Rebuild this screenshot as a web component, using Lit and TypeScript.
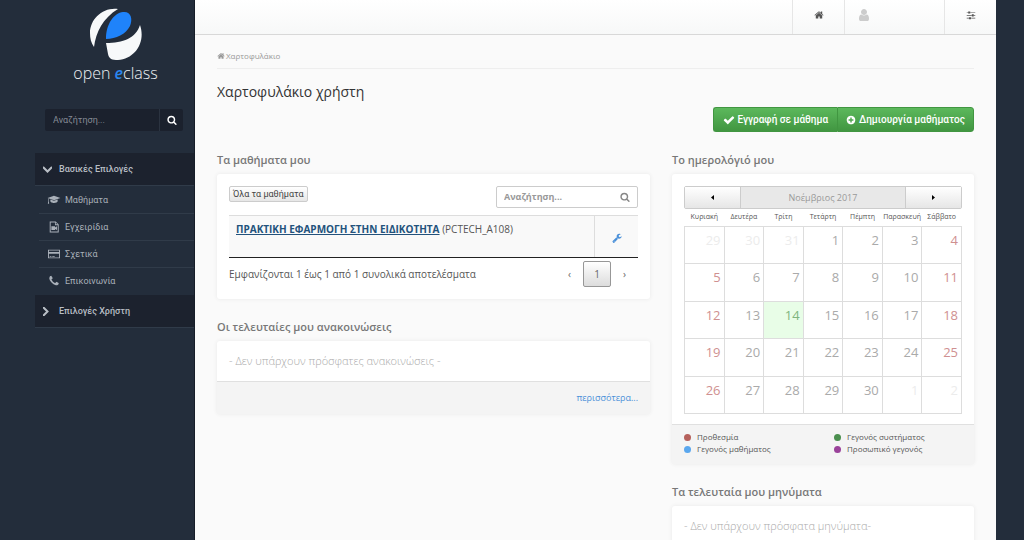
import { LitElement, html, css, svg } from "lit";
import { customElement } from "lit/decorators.js";
import { classMap } from "lit/directives/class-map.js";

const glyphs: Record<string, string> = {
  home: "M1472 992v480q0 26-19 45t-45 19h-384v-384h-256v384h-384q-26 0-45-19t-19-45v-480q0-1 .5-3t.5-3l575-474 575 474q1 2 1 6zm223-69l-62 74q-8 9-21 11h-3q-13 0-21-7l-692-577-692 577q-12 8-24 7-13-2-21-11l-62-74q-8-10-7-23.5t11-21.5l719-599q32-26 76-26t76 26l244 204v-195q0-14 9-23t23-9h192q14 0 23 9t9 23v408l219 182q10 8 11 21.5t-7 23.5z",
  search: "M1216 832q0-185-131.500-316.500t-316.500-131.500-316.500 131.500-131.500 316.500 131.500 316.500 316.500 131.500 316.500-131.500 131.500-316.500zm512 832q0 52-38 90t-90 38q-54 0-90-38l-343-342q-179 124-399 124-143 0-273.500-55.500t-225-150-150-225-55.500-273.500 55.500-273.500 150-225 225-150 273.500-55.500 273.500 55.500 225 150 150 225 55.500 273.500q0 220-124 399l343 343q37 37 37 90z",
  user: "M1536 1399q0 109-62.500 187t-150.500 78h-854q-88 0-150.500-78t-62.500-187q0-85 8.500-160.500t31.500-152 58.500-131 94-89 134.500-34.500q131 128 313 128t313-128q76 0 134.500 34.500t94 89 58.500 131 31.500 152 8.500 160.500zm-256-887q0 159-112.500 271.500t-271.500 112.500-271.500-112.500-112.500-271.500 112.500-271.500 271.500-112.500 271.500 112.500 112.500 271.500z",
  sliders: "M480 1408v128h-352v-128h352zm352-128q26 0 45 19t19 45v256q0 26-19 45t-45 19h-256q-26 0-45-19t-19-45v-256q0-26 19-45t45-19h256zm160-384v128h-864v-128h864zm-640-512v128h-224v-128h224zm1312 1024v128h-736v-128h736zm-960-1152q26 0 45 19t19 45v256q0 26-19 45t-45 19h-256q-26 0-45-19t-19-45v-256q0-26 19-45t45-19h256zm640 512q26 0 45 19t19 45v256q0 26-19 45t-45 19h-256q-26 0-45-19t-19-45v-256q0-26 19-45t45-19h256zm320 128v128h-224v-128h224zm0-512v128h-864v-128h864z",
  check: "M1671 566q0 40-28 68l-724 724-136 136q-28 28-68 28t-68-28l-136-136-362-362q-28-28-28-68t28-68l136-136q28-28 68-28t68 28l294 295 656-657q28-28 68-28t68 28l136 136q28 28 28 68z",
  plus: "M1344 960v-128q0-26-19-45t-45-19h-256v-256q0-26-19-45t-45-19h-128q-26 0-45 19t-19 45v256h-256q-26 0-45 19t-19 45v128q0 26 19 45t45 19h256v256q0 26 19 45t45 19h128q26 0 45-19t19-45v-256h256q26 0 45-19t19-45zm320-64q0 209-103 385.500t-279.500 279.500-385.500 103-385.500-103-279.500-279.500-103-385.500 103-385.500 279.500-279.500 385.500-103 385.500 103 279.500 279.500 103 385.500z",
  wrench: "M448 1472q0-26-19-45t-45-19-45 19-19 45 19 45 45 19 45-19 19-45zm644-420l-682 682q-37 37-90 37-52 0-91-37l-106-108q-38-36-38-90 0-53 38-91l681-681q39 98 114.500 173.500t173.500 114.500zm634-435q0 39-23 106-47 134-164.500 217.500t-258.500 83.500q-185 0-316.500-131.500t-131.500-316.500 131.500-316.500 316.500-131.500q58 0 121.500 16.500t107.500 46.500q16 11 16 28t-16 28l-293 169v224l193 107q5-3 79-48.500t135.500-81 70.500-35.500q15 0 23.500 10t8.500 25z",
  phone: "M1600 1240q0 27-10 70.500t-21 68.500q-21 50-122 106-94 51-186 51-27 0-53-3.500t-57.500-12.500-47-14.500-55.500-20.500-49-18q-98-35-175-83-127-79-264-216t-216-264q-48-77-83-175-3-9-18-49t-20.500-55.500-14.500-47-12.500-57.500-3.500-53q0-92 51-186 56-101 106-122 25-11 68.500-21t70.500-10q14 0 21 3 18 6 53 76 11 19 30 54t35 63.500 31 53.500q3 4 17.500 25t21.500 35.500 7 28.500q0 20-28.500 50t-62 55-62 53-28.500 46q0 9 5 22.500t8.500 20.500 14 24 11.500 19q76 137 174 235t235 174q2 1 19 11.500t24 14 20.500 8.500 22.500 5q18 0 46-28.500t53-62 55-62 50-28.500q14 0 28.500 7t35.500 21.500 25 17.500q25 15 53.500 31t63.500 35 54 30q70 35 76 53 3 7 3 21z",
  cap: "M896 256L1856 590 896 924-64 590zM352 830L896 1020 1440 830V1130Q1380 1340 896 1360 410 1340 352 1130zM30 680L120 712V1080L170 1450H-20L30 1080z",
  book: "M256 64H1150L1600 512V1728H256zM400 208V1584H1456V620H1040V208zM1160 240V500H1420zM500 800H1050V960L1340 800V1360L1050 1200V1360H500z",
  card: "M0 256H1792V1536H0zM140 390V580H1652V390zM140 850V1400H1652V850zM256 1190H512V1300H256zM640 1190H1000V1300H640z",
};

const icon = (name: string, size: string) =>
  html`<svg class="icon ${size}" viewBox="0 0 1792 1792" aria-hidden="true">${svg`<path fill-rule="evenodd" d=${glyphs[name]}></path>`}</svg>`;

const dayNames = ["Κυριακή", "Δευτέρα", "Τρίτη", "Τετάρτη", "Πέμπτη", "Παρασκευή", "Σάββατο"];
const firstCell = new Date(2017, 9, 29);
const weeks = Array.from({ length: 5 }, (_, w) =>
  Array.from({ length: 7 }, (_, d) => {
    const date = new Date(firstCell.getFullYear(), firstCell.getMonth(), firstCell.getDate() + w * 7 + d);
    const outside = date.getMonth() !== 10;
    return { day: date.getDate(), outside, weekend: !outside && (d === 0 || d === 6), today: !outside && date.getDate() === 14 };
  })
);

@customElement("app-root")
export class AppRoot extends LitElement {
  static styles = css`
    * { box-sizing: border-box; }
    :host {
      display: flex;
      height: 100vh;
      overflow: hidden;
      background: #232d3b;
      color: #555;
      font-family: "Open Sans", sans-serif;
      font-size: 11px;
      line-height: 16px;
    }
    a { color: inherit; text-decoration: none; }
    button, input { font: inherit; color: inherit; margin: 0; }
    h1, h2, p, ul { margin: 0; padding: 0; }
    ul { list-style: none; }
    .icon { fill: currentColor; overflow: visible; flex: none; }
    .s8 { width: 8px; height: 8px; }
    .s10 { width: 10px; height: 10px; }
    .s12 { width: 12px; height: 12px; }
    .s14 { width: 14px; height: 14px; }

    .sidebar { flex: none; width: 195px; padding-left: 35px; border-right: 1px solid #161d28; }
    .logo { display: flex; flex-direction: column; align-items: center; padding: 7px 0 0 2px; color: #eef1f4; font-size: 16px; line-height: 24px; font-weight: 300; }
    .logo svg { width: 54px; height: 54px; }
    .logo em { color: #2a86f0; font-weight: 600; }
    .side-search { display: flex; height: 22px; margin: 24px 11px 22px 10px; border-radius: 2px; background: #1b212d; }
    .side-search input { flex: 1; min-width: 0; border: 0; padding: 0 8px; background: none; font-family: Roboto, "Open Sans", sans-serif; font-size: 9px; outline: 0; }
    .side-search input::placeholder { color: #858b95; opacity: 1; }
    .side-search button { display: flex; align-items: center; justify-content: center; width: 24px; padding: 0; border: 0; border-left: 1px solid #2b3340; background: none; color: #fff; }
    .group { display: flex; align-items: center; gap: 7px; width: 100%; height: 33px; padding: 0 8px; border: 0; border-bottom: 1px solid #303b49; background: #1c222e; color: #b9bec5; font-family: Roboto, "Open Sans", sans-serif; font-size: 9px; font-weight: 500; text-align: left; }
    .chevron { width: 9px; height: 9px; fill: none; stroke: currentColor; stroke-width: 2; }
    .links { padding: 1px 0 0 4px; }
    .links a { display: flex; align-items: center; gap: 5px; height: 27px; padding-left: 9px; border-bottom: 1px solid #303b49; color: #a9b0b9; font-family: Roboto, "Open Sans", sans-serif; font-size: 9px; }
    .links li:last-child a { border-bottom-color: transparent; }

    .main { flex: 1; min-width: 0; margin-right: 28px; background: #fafafa; }
    .topbar { display: flex; justify-content: flex-end; height: 35px; border-bottom: 1px solid #d8d8d8; background: linear-gradient(#fff, #f7f8f8); }
    .topbar a { display: flex; align-items: center; justify-content: center; width: 52px; padding-bottom: 5px; border-left: 1px solid #e6e6e6; color: #555; }
    .topbar .profile { width: 100px; justify-content: flex-start; padding-left: 12px; color: #ccc; }
    .content { padding: 13px 22px 0; }
    .crumbs { display: flex; align-items: center; gap: 1px; height: 21px; padding-bottom: 4px; border-bottom: 1px solid #eee; color: #999; font-size: 8px; }
    h1 { margin-top: 12px; color: #333; font-size: 14px; line-height: 22px; font-weight: 400; }
    .actions { display: flex; justify-content: flex-end; margin-top: 4px; }
    .actions button { display: flex; align-items: center; gap: 3px; height: 25px; padding: 0 9px; border: 1px solid #419641; background: linear-gradient(#5cb85c, #419641); color: #fff; font-family: Roboto, "Open Sans", sans-serif; font-size: 10px; font-weight: 500; }
    .actions button:first-child { border-radius: 3px 0 0 3px; border-right: 0; }
    .actions button:last-child { border-radius: 0 3px 3px 0; padding: 0 8px; }
    .columns { display: grid; grid-template-columns: 433fr 302fr; gap: 22px; margin-top: 18px; }
    h2 { color: #777; font-size: 11px; line-height: 20px; font-weight: 600; padding-bottom: 4px; }
    .card { margin-bottom: 18px; border-radius: 3px; background: #fff; box-shadow: 0 0 4px #e9e9e9; }
    .body { padding: 12px; }
    .foot { padding: 8px 12px; border-top: 1px solid #e0e0e0; background: #f4f4f4; }

    .tools { display: flex; justify-content: space-between; align-items: flex-start; }
    .all { height: 16px; padding: 0 3px; border: 1px solid #ccc; border-radius: 2px; background: linear-gradient(#fff, #e6e6e6); font-family: Roboto, "Open Sans", sans-serif; font-size: 9px; line-height: 14px; color: #444; }
    .find { display: flex; align-items: center; width: 142px; height: 22px; padding: 0 7px; border: 1px solid #ccc; border-radius: 2px; color: #888; }
    .find input { flex: 1; min-width: 0; border: 0; padding: 0; outline: 0; font-size: 9px; font-weight: 700; }
    .find input::placeholder { color: #999; opacity: 1; }
    .courses { width: 100%; margin-top: 7px; border-spacing: 0; background: #f9f9f9; border-top: 1px solid #ddd; border-bottom: 1px solid #222; }
    .courses td { height: 41px; padding: 5px 7px; vertical-align: top; font-size: 10px; }
    .courses .tool { width: 44px; border-left: 1px solid #ddd; vertical-align: middle; text-align: center; color: #4a90d9; }
    .courses .tool .icon { vertical-align: middle; }
    .course { color: #23527c; font-weight: 700; text-decoration: underline; }
    .summary { display: flex; align-items: center; justify-content: space-between; padding-top: 3px; font-size: 10px; }
    .pages { display: flex; align-items: center; }
    .pages button { width: 27px; height: 26px; padding: 0; border: 0; background: none; color: #666; }
    .pages .current { width: 28px; border: 1px solid #979797; border-radius: 2px; background: linear-gradient(#fff, #dcdcdc); }
    .empty { color: #aaa; font-size: 11px; font-weight: 300; }
    .more { text-align: right; color: #4a90d9; font-size: 9px; }

    .month { display: flex; height: 23px; border: 1px solid #ccc; border-radius: 2px; background: #e8e8e8; color: #999; font-size: 9px; }
    .month span { flex: 1; text-align: center; line-height: 21px; }
    .month button { display: flex; align-items: center; justify-content: center; width: 56px; padding: 0; border: 0; background: linear-gradient(#fff, #e6e6e6); color: #111; }
    .month svg { width: 3px; height: 5px; }
    .month button:first-child { border-right: 1px solid #ccc; }
    .month button:last-child { border-left: 1px solid #ccc; }
    .calendar { width: 100%; height: 205px; table-layout: fixed; border-collapse: collapse; }
    .calendar th { height: 17px; padding: 0; font-size: 7px; line-height: 16px; font-weight: 400; white-space: nowrap; }
    .calendar td { height: 37px; padding: 4px 3px; border: 1px solid #ddd; vertical-align: top; text-align: right; color: #aaa; font-size: 13px; line-height: 18px; }
    .calendar .weekend { color: #cf9090; }
    .calendar .outside { color: #ececec; }
    .calendar .today { background: #e8fde7; color: #7fb57f; }
    .legend { display: grid; grid-template-columns: 1fr 1fr; column-gap: 22px; padding: 6px 12px 9px; font-size: 8px; line-height: 12px; }
    .body.dates { padding-bottom: 10px; }
    .legend li { display: flex; align-items: center; gap: 6px; }
    .dot { width: 7px; height: 7px; border-radius: 50%; }
    .red { background: #b5615c; }
    .green { background: #4b8f4f; }
    .blue { background: #5aa7ee; }
    .purple { background: #9a429a; }
  `;

  render() {
    return html`
      <aside class="sidebar">
        <a class="logo" href="#">
          <svg viewBox="0 0 54 54" aria-hidden="true">
            <path fill="#f7f9fa" d="M29 2C14 0 1 12 1 26c0 5 1 10 4 14C7 25 14 11 29 2z" />
            <path fill="#1f83fa" d="M17 32C17 17 25 6 34 5c8-1 10 7 7 14-4 8-14 13-24 13z" />
            <path fill="#f7f9fa" d="M51 18c6 17-5 34-22 35-6 0-9-1-10-6l-2-11c17 0 30-5 34-18z" />
          </svg>
          <span>open <em>e</em>class</span>
        </a>
        <form class="side-search">
          <input type="text" placeholder="Αναζήτηση..." aria-label="Αναζήτηση" />
          <button type="button" aria-label="Αναζήτηση">${icon("search", "s10")}</button>
        </form>
        <nav>
          <button class="group" type="button">
            <svg class="chevron" viewBox="0 0 9 9"><path d="M0 2l4.500 4.500L9 2" /></svg>Βασικές Επιλογές
          </button>
          <ul class="links">
            <li><a href="#">${icon("cap", "s12")}Μαθήματα</a></li>
            <li><a href="#">${icon("book", "s12")}Εγχειρίδια</a></li>
            <li><a href="#">${icon("card", "s12")}Σχετικά</a></li>
            <li><a href="#">${icon("phone", "s12")}Επικοινωνία</a></li>
          </ul>
          <button class="group" type="button">
            <svg class="chevron" viewBox="0 0 9 9"><path d="M0 0l4.500 4.500L0 9" /></svg>Επιλογές Χρήστη
          </button>
        </nav>
      </aside>
      <main class="main">
        <header class="topbar">
          <a href="#" aria-label="Χαρτοφυλάκιο">${icon("home", "s10")}</a>
          <a href="#" class="profile" aria-label="Χρήστης">${icon("user", "s14")}</a>
          <a href="#" aria-label="Εργαλεία">${icon("sliders", "s10")}</a>
        </header>
        <div class="content">
          <nav class="crumbs">${icon("home", "s8")}<a href="#">Χαρτοφυλάκιο</a></nav>
          <h1>Χαρτοφυλάκιο χρήστη</h1>
          <div class="actions">
            <button type="button">${icon("check", "s12")}Εγγραφή σε μάθημα</button>
            <button type="button">${icon("plus", "s10")}Δημιουργία μαθήματος</button>
          </div>
          <div class="columns">
            <div>
              <h2>Τα μαθήματα μου</h2>
              <section class="card body">
                <div class="tools">
                  <button class="all" type="button">Όλα τα μαθήματα</button>
                  <label class="find"><input type="text" placeholder="Αναζήτηση..." aria-label="Αναζήτηση" />${icon("search", "s10")}</label>
                </div>
                <table class="courses">
                  <tr>
                    <td><a class="course" href="#">ΠΡΑΚΤΙΚΗ ΕΦΑΡΜΟΓΗ ΣΤΗΝ ΕΙΔΙΚΟΤΗΤΑ</a> (PCTECH_A108)</td>
                    <td class="tool"><a href="#" aria-label="Ρυθμίσεις">${icon("wrench", "s10")}</a></td>
                  </tr>
                </table>
                <div class="summary">
                  <span>Εμφανίζονται 1 έως 1 από 1 συνολικά αποτελέσματα</span>
                  <div class="pages">
                    <button type="button">‹</button><button class="current" type="button">1</button><button type="button">›</button>
                  </div>
                </div>
              </section>
              <h2>Οι τελευταίες μου ανακοινώσεις</h2>
              <section class="card">
                <p class="body empty">- Δεν υπάρχουν πρόσφατες ανακοινώσεις -</p>
                <div class="foot more"><a href="#">περισσότερα...</a></div>
              </section>
            </div>
            <div>
              <h2>Το ημερολόγιό μου</h2>
              <section class="card">
                <div class="body dates">
                  <div class="month">
                    <button type="button" aria-label="Προηγούμενος"><svg viewBox="0 0 3 5"><path d="M3 0v5L0 2.500z" /></svg></button>
                    <span>Νοέμβριος 2017</span>
                    <button type="button" aria-label="Επόμενος"><svg viewBox="0 0 3 5"><path d="M0 0v5l3-2.500z" /></svg></button>
                  </div>
                  <table class="calendar">
                    <thead><tr>${dayNames.map((n) => html`<th>${n}</th>`)}</tr></thead>
                    <tbody>
                      ${weeks.map((week) => html`<tr>${week.map((c) => html`<td class=${classMap({ outside: c.outside, weekend: c.weekend, today: c.today })}>${c.day}</td>`)}</tr>`)}
                    </tbody>
                  </table>
                </div>
                <ul class="foot legend">
                  <li><i class="dot red"></i>Προθεσμία</li>
                  <li><i class="dot green"></i>Γεγονός συστήματος</li>
                  <li><i class="dot blue"></i>Γεγονός μαθήματος</li>
                  <li><i class="dot purple"></i>Προσωπικό γεγονός</li>
                </ul>
              </section>
              <h2>Τα τελευταία μου μηνύματα</h2>
              <section class="card"><p class="body empty">- Δεν υπάρχουν πρόσφατα μηνύματα-</p></section>
            </div>
          </div>
        </div>
      </main>
    `;
  }
}
